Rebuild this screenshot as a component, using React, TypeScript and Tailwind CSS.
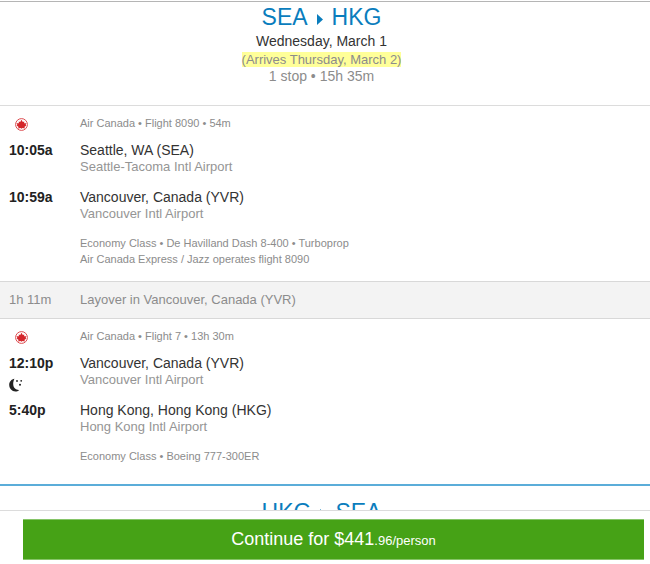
import React from 'react'

interface Stop {
  time: string;
  city: string;
  airport: string;
  overnight?: boolean;
}

interface Segment {
  summary: string;
  stops: Stop[];
  details: string[];
}

const segments: Segment[] = [
  {
    summary: 'Air Canada • Flight 8090 • 54m',
    stops: [
      { time: '10:05a', city: 'Seattle, WA (SEA)', airport: 'Seattle-Tacoma Intl Airport' },
      { time: '10:59a', city: 'Vancouver, Canada (YVR)', airport: 'Vancouver Intl Airport' },
    ],
    details: [
      'Economy Class • De Havilland Dash 8-400 • Turboprop',
      'Air Canada Express / Jazz operates flight 8090',
    ],
  },
  {
    summary: 'Air Canada • Flight 7 • 13h 30m',
    stops: [
      { time: '12:10p', city: 'Vancouver, Canada (YVR)', airport: 'Vancouver Intl Airport', overnight: true },
      { time: '5:40p', city: 'Hong Kong, Hong Kong (HKG)', airport: 'Hong Kong Intl Airport' },
    ],
    details: ['Economy Class • Boeing 777-300ER'],
  },
]

function AirlineLogo() {
  return (
    <svg viewBox="0 0 26 26" className="h-[13px] w-[13px]" aria-hidden="true">
      <circle cx="13" cy="13" r="11.8" fill="#fff" stroke="#dc4a4e" strokeWidth="2" />
      <path
        fill="#d4262b"
        d="M13 3.500l2.600 4.700 3-1.400-.4 3.800 4.600-.2-1.400 3 1 1.800-3.600 2.600 1.200 3.400-5-1.400-2 1.600-2-1.600-5 1.400 1.200-3.400-3.600-2.600 1-1.800-1.400-3 4.600.2-.4-3.800 3 1.400z"
      />
    </svg>
  )
}

function MoonIcon() {
  return (
    <svg viewBox="0 0 14 14" className="h-[14px] w-[14px]" fill="#222" role="img" aria-label="Overnight flight">
      <path d="M5.500.8C2.300 1.300.2 3.900.2 7c0 3.600 2.800 6.400 6.200 6.400 1.500 0 2.700-.5 3.800-1.500C6.900 12.100 4.200 9.700 4.200 6c0-2 .5-3.800 1.300-5.200z" />
      <circle cx="8" cy="3" r="0.900" />
      <circle cx="12.200" cy="2.800" r="0.900" />
      <circle cx="11" cy="6.800" r="1" />
    </svg>
  )
}

function RouteTitle({ from, to }: { from: string; to: string }) {
  return (
    <h2 className="flex items-center justify-center gap-[9px] text-[23px] leading-7 text-[#0a7dbd]">
      {from}
      <svg viewBox="0 0 6 11" className="mt-1 h-[11px] w-[6px]" fill="currentColor" aria-hidden="true">
        <path d="M0 0l6 5.500-6 5.500z" />
      </svg>
      {to}
    </h2>
  )
}

function FlightSegment({ segment }: { segment: Segment }) {
  return (
    <section className="px-[9px] pt-[9px] pb-[14px]">
      <div className="flex items-start">
        <div className="w-[71px] shrink-0 pt-[3px] pl-[6px]">
          <AirlineLogo />
        </div>
        <p className="text-[11px] leading-4 text-[#8c8c8c]">{segment.summary}</p>
      </div>
      <div className="mt-[10px] flex flex-col gap-[13px]">
        {segment.stops.map((stop) => (
          <div key={stop.time} className="flex">
            <div className="w-[71px] shrink-0">
              <p className="text-sm leading-[18px] font-bold text-[#222]">{stop.time}</p>
              {stop.overnight && (
                <div className="h-4 pt-[6px]">
                  <MoonIcon />
                </div>
              )}
            </div>
            <div>
              <p className="text-sm leading-[18px] text-[#333]">{stop.city}</p>
              <p className="text-[13px] leading-4 text-[#959595]">{stop.airport}</p>
            </div>
          </div>
        ))}
      </div>
      <div className="mt-[13px] pl-[71px]">
        {segment.details.map((line) => (
          <p key={line} className="text-[11px] leading-4 text-[#8c8c8c]">{line}</p>
        ))}
      </div>
    </section>
  )
}

export default function App() {
  return (
    <div className="flex h-screen flex-col bg-white font-['Liberation_Sans',Arial,sans-serif]">
      <main className="min-h-0 flex-1 overflow-hidden pt-px">
        <header className="border-y border-t-[#b5b5b5] border-b-[#dcdcdc] pt-px pr-[7px] pb-[21px] text-center">
          <RouteTitle from="SEA" to="HKG" />
          <p className="text-sm leading-5 text-[#333]">Wednesday, March 1</p>
          <p className="mt-px text-[13px] leading-4 text-[#8c8c8c]">
            <mark className="bg-[#ffff99] text-inherit">(Arrives Thursday, March 2)</mark>
          </p>
          <p className="text-sm leading-4 text-[#8c8c8c]">1 stop • 15h 35m</p>
        </header>

        <FlightSegment segment={segments[0]} />

        {/* layover between the two flights */}
        <div className="flex border-y border-[#d8d8d8] bg-[#f3f3f3] px-[9px] py-[10px] text-[13px] leading-4 text-[#8c8c8c]">
          <p className="w-[71px] shrink-0">1h 11m</p>
          <p>Layover in Vancouver, Canada (YVR)</p>
        </div>

        <FlightSegment segment={segments[1]} />

        {/* return trip */}
        <header className="mt-[6px] border-t-2 border-[#5badd9] pt-3 pr-[7px] text-center">
          <RouteTitle from="HKG" to="SEA" />
        </header>
      </main>

      <footer className="border-t border-[#dcdcdc] pt-2 pr-[6px] pb-1 pl-[23px]">
        <button type="button" className="h-[41px] w-full border-y border-[#86c568] bg-[#46a216] text-lg leading-6 text-white">
          Continue for <span className="font-medium">$441</span>
          <span className="text-[13px]">.96/person</span>
        </button>
      </footer>
    </div>
  )
}
